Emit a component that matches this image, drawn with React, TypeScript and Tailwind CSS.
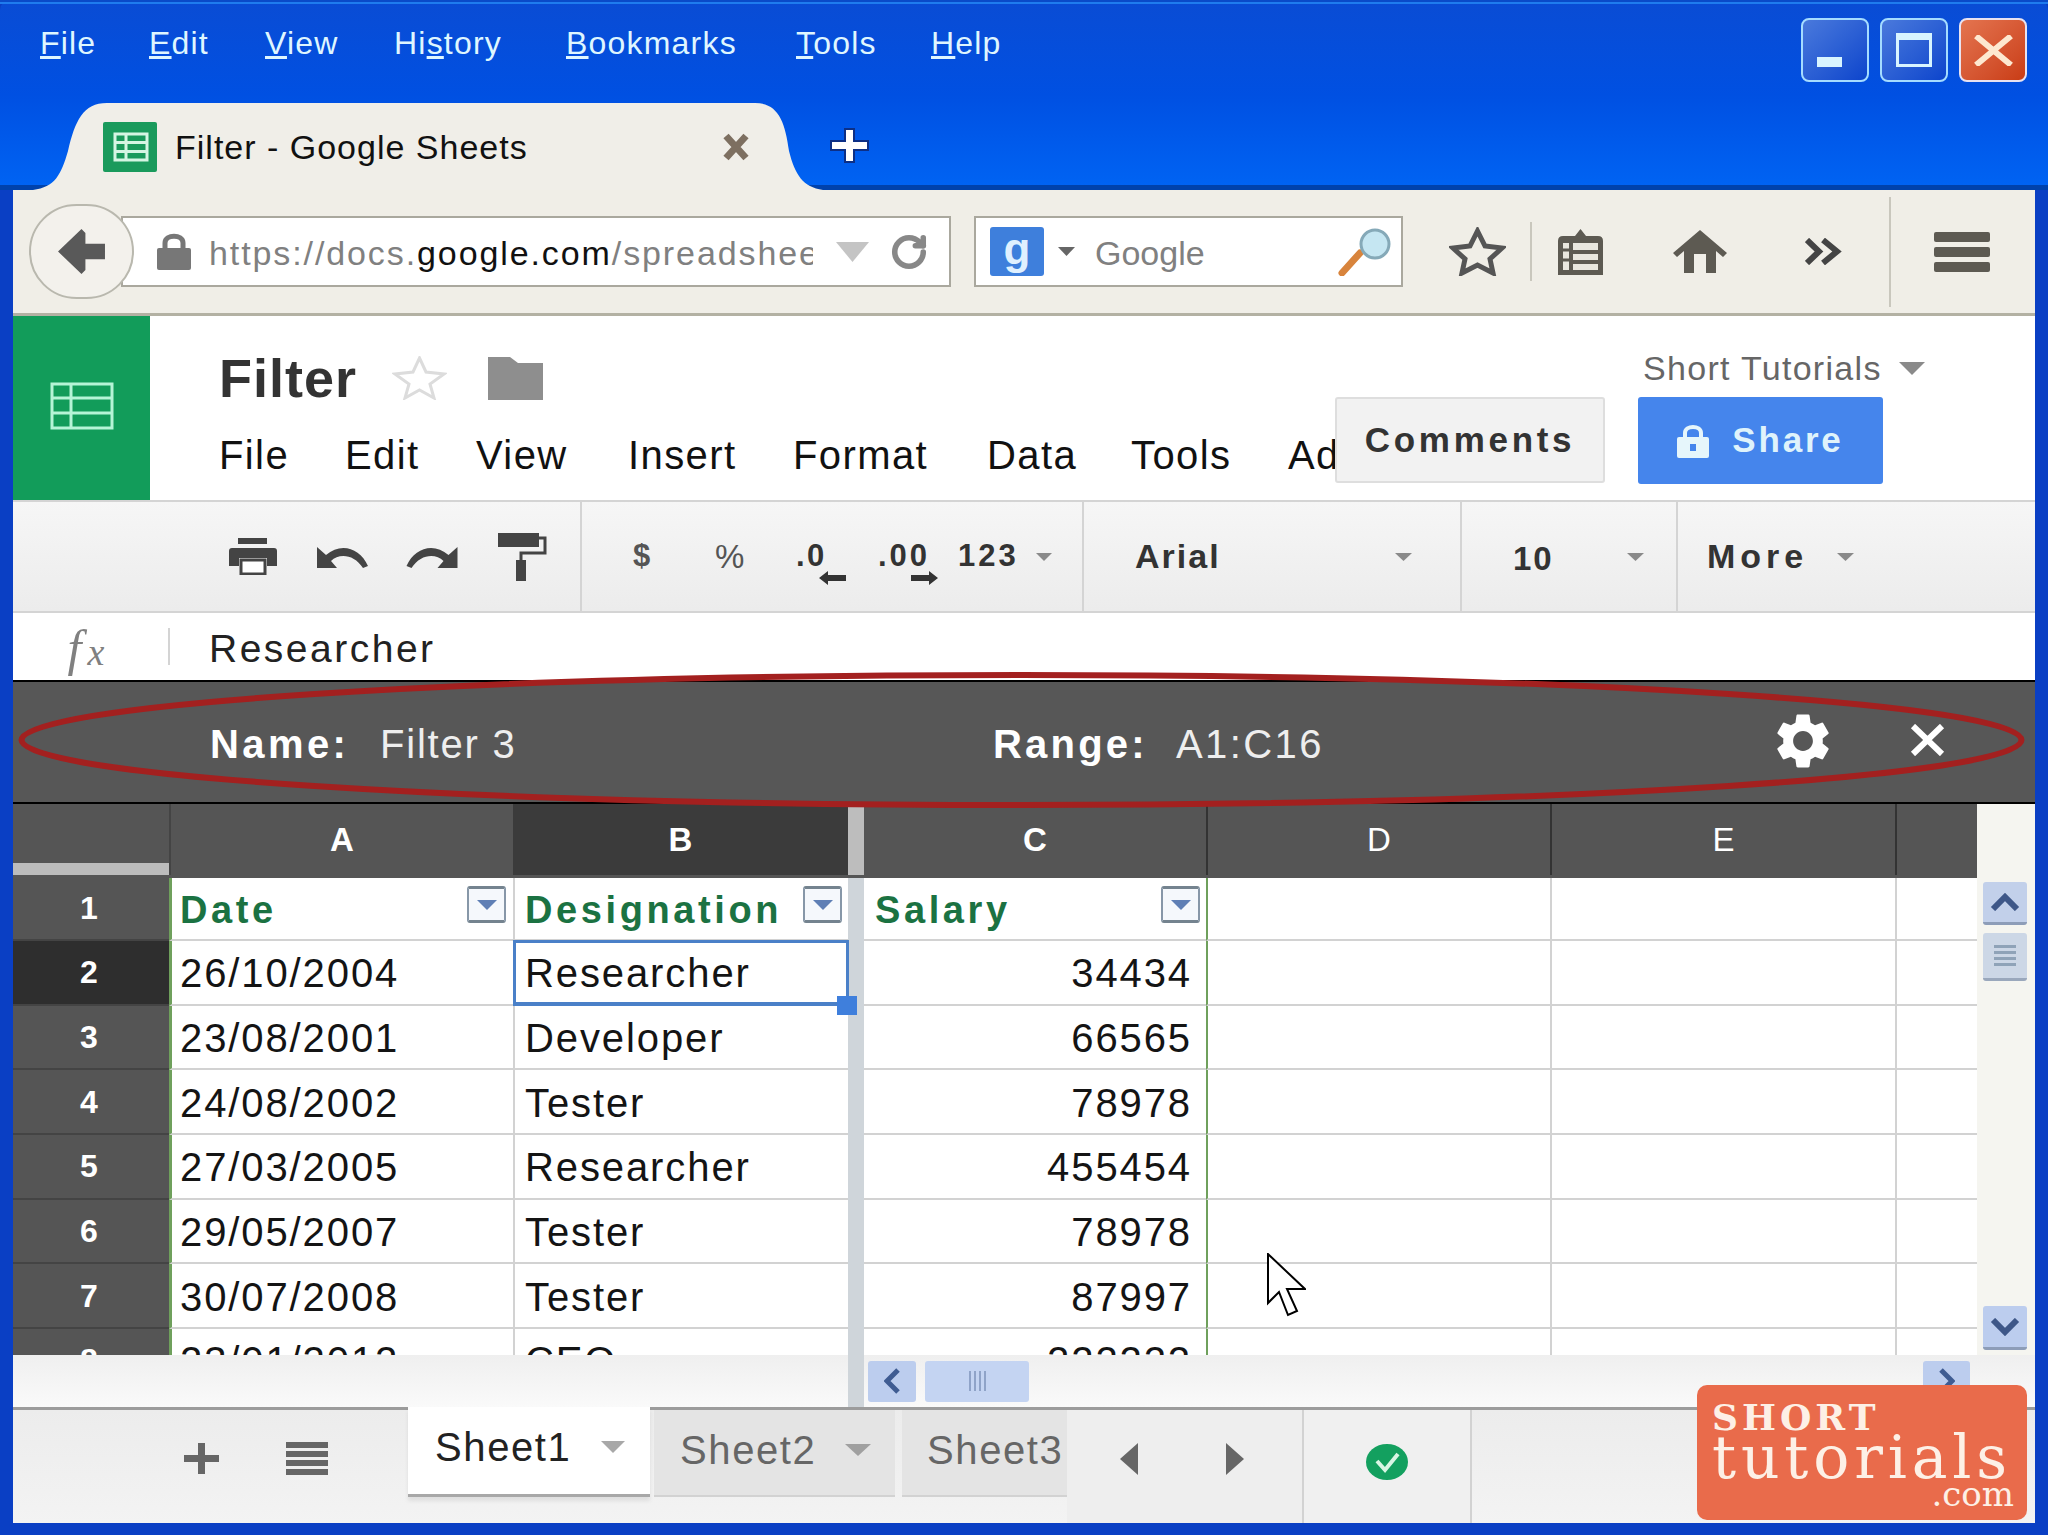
import { RotateCw } from "lucide-react";
import { MdSettings } from "react-icons/md";

const browserMenu = [
  { pre: "", u: "F", post: "ile", w: "w-[109px]" },
  { pre: "", u: "E", post: "dit", w: "w-[116px]" },
  { pre: "", u: "V", post: "iew", w: "w-[129px]" },
  { pre: "Hi", u: "s", post: "tory", w: "w-[172px]" },
  { pre: "", u: "B", post: "ookmarks", w: "w-[230px]" },
  { pre: "", u: "T", post: "ools", w: "w-[135px]" },
  { pre: "", u: "H", post: "elp", w: "w-[80px]" },
];

const sheetMenu = [
  { label: "File", w: "w-[126px]" },
  { label: "Edit", w: "w-[131px]" },
  { label: "View", w: "w-[152px]" },
  { label: "Insert", w: "w-[165px]" },
  { label: "Format", w: "w-[194px]" },
  { label: "Data", w: "w-[144px]" },
  { label: "Tools", w: "w-[157px]" },
  { label: "Add-ons", w: "w-[100px]" },
];

const rows = [
  { n: "2", date: "26/10/2004", job: "Researcher", pay: "34434" },
  { n: "3", date: "23/08/2001", job: "Developer", pay: "66565" },
  { n: "4", date: "24/08/2002", job: "Tester", pay: "78978" },
  { n: "5", date: "27/03/2005", job: "Researcher", pay: "455454" },
  { n: "6", date: "29/05/2007", job: "Tester", pay: "78978" },
  { n: "7", date: "30/07/2008", job: "Tester", pay: "87997" },
  { n: "8", date: "23/01/2012", job: "CEO", pay: "222222" },
];

const colTemplate = "grid grid-cols-[156px_344px_335px_16px_342px_344px_345px_82px]";

const Tri = ({ className = "", color = "#8a8a8a" }: { className?: string; color?: string }) => (
  <svg viewBox="0 0 10 8" preserveAspectRatio="none" className={className}>
    <path d="M0 0H10L5 8Z" fill={color} />
  </svg>
);

const FilterBtn = () => (
  <div className="flex h-[37px] w-[39px] -translate-y-[4px] items-center justify-center rounded-[3px] border-x-2 border-y-[3px] border-x-[#8797a8] border-y-[#74838f] bg-[#f5f8fc]">
    <Tri className="h-[10px] w-[20px]" color="#5f7fb5" />
  </div>
);

const HeadLabel = ({ children }: { children: React.ReactNode }) => (
  <span className="translate-y-[2px] text-[38px] font-bold tracking-[3.6px] text-[#1b7242]">{children}</span>
);

const Printer = () => (
  <svg viewBox="0 0 48 37" className="h-[37px] w-[48px]">
    <rect x="9" y="0" width="29" height="6" fill="#444" />
    <path d="M3 10H45Q48 10 48 13V28H38V20H10V28H0V13Q0 10 3 10Z" fill="#444" />
    <rect x="12" y="22" width="24" height="14" fill="#fff" stroke="#444" strokeWidth="3" />
  </svg>
);

const Undo = ({ flip = false }: { flip?: boolean }) => (
  <svg viewBox="0 0 51 22" className={flip ? "h-[22px] w-[52px] -scale-x-100" : "h-[22px] w-[51px]"}>
    <path d="M0 1V22H20L14 15C22 7 37 8 46 22L51 20C43 2 24-4 9 9Z" fill="#444" />
  </svg>
);

const Roller = () => (
  <svg viewBox="0 0 49 48" className="h-[48px] w-[49px]">
    <rect x="0" y="0" width="41" height="14" fill="#444" />
    <path d="M41 5H47V20H23V28" fill="none" stroke="#444" strokeWidth="3" />
    <rect x="18" y="27" width="10" height="21" fill="#444" />
  </svg>
);

const Cell = ({ children, className = "" }: { children?: React.ReactNode; className?: string }) => (
  <div className={`flex items-center whitespace-nowrap border-b-2 border-b-[#d2d2d2] text-[40px] tracking-[1.9px] text-[#141414] ${className}`}>
    {children}
  </div>
);

export default function App() {
  return (
    <div className="relative flex h-[1535px] w-[2048px] flex-col overflow-hidden bg-[#0a3fc4] font-['Liberation_Sans',Arial,sans-serif]">
      {/* title bar */}
      <div className="h-[190px] shrink-0 rounded-t-[10px] bg-gradient-to-b from-[#0a4cd4] via-[#0050e2] to-[#0064f4] shadow-[inset_0_-5px_0_#0042ac]">
        <div className="h-[4px] border-t-2 border-t-[#0a4ac8] bg-[#1f7cee]" />
        <div className="flex h-[99px] justify-between pl-[40px] pr-[21px] pt-[14px]">
          <div className="flex h-[50px] items-center text-[32px] text-[#dff6ff]">
            {browserMenu.map((m) => (
              <span key={m.u + m.post} className={`${m.w} shrink-0 tracking-[1.2px]`}>
                {m.pre}
                <u>{m.u}</u>
                {m.post}
              </span>
            ))}
          </div>
          <div className="flex gap-[11px]">
            <div className="flex h-[64px] w-[68px] items-end rounded-[8px] border-2 border-[#a5dcff] bg-gradient-to-br from-[#4a79dc] to-[#0c44cc] pb-[13px] pl-[14px]">
              <div className="h-[10px] w-[25px] bg-[#d8f4ff]" />
            </div>
            <div className="flex h-[64px] w-[68px] items-center justify-center rounded-[8px] border-2 border-[#a5dcff] bg-gradient-to-br from-[#4a79dc] to-[#0c44cc]">
              <div className="h-[34px] w-[36px] border-[3px] border-t-[7px] border-[#d8f4ff]" />
            </div>
            <div className="flex h-[64px] w-[68px] items-center justify-center rounded-[8px] border-2 border-[#e8e2f0] bg-gradient-to-br from-[#e4744f] to-[#c93c14]">
              <svg viewBox="0 0 43 31" className="h-[31px] w-[43px]">
                <path d="M4 1L39 30M39 1L4 30" stroke="#fde8d0" strokeWidth="6" />
              </svg>
            </div>
          </div>
        </div>
        <div className="flex h-[87px] items-start pl-[33px]">
          <div className="relative h-[87px] w-[790px] shrink-0">
            <svg viewBox="0 0 790 87" preserveAspectRatio="none" className="absolute inset-0 h-full w-full">
              <path d="M0 87C22 84 28 72 35 48C42 18 50 0 74 0H722C745 0 752 18 756 48C762 72 770 84 790 87Z" fill="#f0eee8" />
            </svg>
            <div className="relative flex h-[87px] items-start pl-[70px] pt-[19px]">
              <svg viewBox="0 0 54 50" className="h-[50px] w-[54px] shrink-0">
                <rect width="54" height="50" rx="2" fill="#1a9a5c" />
                <path d="M12 12H44V38H12ZM12 20.5H44M12 29.5H44M23 12V38" fill="#1a9a5c" stroke="#d5f5e3" strokeWidth="3" />
              </svg>
              <span className="ml-[18px] w-[547px] shrink-0 text-[34px] tracking-[1px] text-[#111]">Filter - Google Sheets</span>
              <svg viewBox="0 0 28 28" className="mt-[11px] h-[28px] w-[28px] shrink-0">
                <path d="M4 3L24 25M24 3L4 25" stroke="#7d6f60" strokeWidth="7" />
              </svg>
            </div>
          </div>
          <svg viewBox="0 0 39 35" className="ml-[7px] mt-[25px] h-[35px] w-[39px]">
            <path d="M15 1H24V13H38V22H24V34H15V22H1V13H15Z" fill="#fff" stroke="#0c2f86" strokeWidth="2" />
          </svg>
        </div>
      </div>

      {/* navigation toolbar */}
      <div className="relative mx-[13px] flex h-[126px] shrink-0 items-center border-b-[3px] border-b-[#b3b1a3] bg-[#f0eee7]">
        <div className="z-10 ml-[16px] flex h-[95px] w-[105px] shrink-0 items-center justify-center rounded-full border-2 border-[#b9b8ae] bg-[#f3f1ec]">
          <svg viewBox="0 0 48 46" className="h-[45px] w-[49px]">
            <path d="M24 0L0 23L24 46L28 42V31H48V15H28V4Z" fill="#595959" />
          </svg>
        </div>
        <div className="-ml-[13px] flex h-[71px] w-[830px] shrink-0 items-center border-2 border-[#aaa89e] bg-white pl-[34px]">
          <svg viewBox="0 0 34 37" className="h-[37px] w-[34px] shrink-0">
            <path d="M8 17V10C8 1 26 1 26 10V17" fill="none" stroke="#777" strokeWidth="5" />
            <rect x="0" y="15" width="34" height="22" rx="2" fill="#777" />
          </svg>
          <div className="ml-[18px] w-[604px] shrink-0 overflow-hidden whitespace-nowrap pt-[4px] text-[34px] tracking-[1.9px] text-[#808080]">
            https://docs.<span className="text-[#111]">google.com</span>/spreadsheets/d/1
          </div>
          <Tri className="ml-[23px] h-[20px] w-[33px] shrink-0" color="#c4c4c4" />
          <RotateCw className="ml-[21px] h-[38px] w-[38px] shrink-0 text-[#888]" strokeWidth={3.5} />
        </div>
        <div className="ml-[23px] flex h-[71px] w-[429px] shrink-0 items-center border-2 border-[#aaa89e] bg-white pl-[14px]">
          <div className="flex h-[49px] w-[54px] shrink-0 items-center justify-center rounded-[3px] bg-[#3e7fdc] pb-[6px] text-[44px] font-bold leading-none text-[#dff0ff]">g</div>
          <Tri className="ml-[14px] h-[9px] w-[17px] shrink-0" color="#666" />
          <span className="ml-[20px] w-[243px] shrink-0 pt-[4px] text-[34px] text-[#808080]">Google</span>
          <svg viewBox="0 0 55 49" className="h-[49px] w-[55px] shrink-0">
            <path d="M4 46L22 26" stroke="#d8843c" strokeWidth="7" strokeLinecap="round" />
            <ellipse cx="37" cy="17" rx="14" ry="14" fill="#c5e6f2" stroke="#85a9b8" strokeWidth="3" />
          </svg>
        </div>
        <svg viewBox="0 0 57 49" className="ml-[46px] h-[49px] w-[57px] shrink-0">
          <path d="M28.5 4L36 19L53 21L41 32L44 46L28.5 38L13 46L16 32L4 21L21 19Z" fill="none" stroke="#555" strokeWidth="5" />
        </svg>
        <div className="ml-[24px] h-[59px] w-[2px] shrink-0 bg-[#c9c7bd]" />
        <svg viewBox="0 0 47 46" className="ml-[25px] h-[46px] w-[47px] shrink-0">
          <path d="M23.5 0L29 7H41Q46 7 46 12V46H1V12Q1 7 6 7H18Z" fill="#5d5a52" />
          <path d="M16 14H41V21H16ZM16 25H41V31H16ZM16 35H41V41H16ZM6 14H12V41H6Z" fill="#e9e7df" />
          <path d="M6 21H12M6 31H12" stroke="#5d5a52" strokeWidth="3" />
        </svg>
        <svg viewBox="0 0 54 43" className="ml-[69px] h-[43px] w-[54px] shrink-0">
          <path d="M27 0L54 23L50 27L43 21V43H33V24H21V43H11V21L4 27L0 23Z" fill="#5d5a52" />
        </svg>
        <svg viewBox="0 0 40 27" className="ml-[78px] h-[27px] w-[40px] shrink-0">
          <path d="M2 2L14 13.5L2 25M18 2L32 13.5L18 25" fill="none" stroke="#444" strokeWidth="6" />
        </svg>
        <div className="ml-[44px] h-[110px] w-[2px] shrink-0 bg-[#c9c7bd]" />
        <div className="ml-[43px] flex w-[56px] shrink-0 flex-col gap-[5px]">
          <div className="h-[10px] rounded-[2px] bg-[#5d5a52]" />
          <div className="h-[10px] rounded-[2px] bg-[#5d5a52]" />
          <div className="h-[10px] rounded-[2px] bg-[#5d5a52]" />
        </div>
      </div>

      {/* page */}
      <div className="mx-[13px] flex h-[1207px] flex-col bg-white">
        {/* sheets header */}
        <div className="flex h-[184px] shrink-0">
          <div className="flex w-[137px] shrink-0 items-center justify-center bg-[#129c5a] pb-[5px]">
            <svg viewBox="0 0 64 48" className="h-[48px] w-[64px]">
              <path d="M2 2H62V46H2ZM2 16H62M2 31H62M21 2V46" fill="none" stroke="#b5f4d6" strokeWidth="3" />
            </svg>
          </div>
          <div className="w-[1185px] shrink-0 pl-[69px] pt-[36px]">
            <div className="flex h-[52px] items-center">
              <span className="w-[173px] shrink-0 text-[54px] font-bold tracking-[1px] text-[#333]">Filter</span>
              <svg viewBox="0 0 55 44" className="h-[44px] w-[55px] shrink-0">
                <path d="M27.5 2L34 16L52 18L38 28L42 42L27.5 34L13 42L17 28L3 18L21 16Z" fill="none" stroke="#dcdcdc" strokeWidth="3" />
              </svg>
              <svg viewBox="0 0 55 43" className="ml-[41px] h-[43px] w-[55px] shrink-0">
                <path d="M0 0H22L30 6H55V43H0Z" fill="#8e8e8e" />
              </svg>
            </div>
            <div className="mt-[26px] flex h-[50px] w-[1116px] items-center overflow-hidden text-[40px] tracking-[1.4px] text-[#111]">
              {sheetMenu.map((m) => (
                <span key={m.label} className={`${m.w} shrink-0 whitespace-nowrap`}>
                  {m.label}
                </span>
              ))}
            </div>
          </div>
          <div className="flex-1 pt-[32px]">
            <div className="flex h-[40px] items-center pl-[308px]">
              <span className="w-[256px] shrink-0 whitespace-nowrap text-[34px] tracking-[1.3px] text-[#666]">Short Tutorials</span>
              <Tri className="h-[13px] w-[26px]" />
            </div>
            <div className="mt-[9px] flex">
              <div className="flex h-[86px] w-[270px] shrink-0 items-center justify-center rounded-[3px] border-2 border-[#dedede] bg-[#f2f2f2] text-[35px] font-bold tracking-[3.7px] text-[#333]">
                Comments
              </div>
              <div className="ml-[33px] flex h-[87px] w-[245px] shrink-0 items-center justify-center gap-[23px] rounded-[3px] bg-[#4585ec] text-[35px] font-bold tracking-[2.8px] text-[#dff3fb]">
                <svg viewBox="0 0 32 34" className="h-[34px] w-[32px]">
                  <path d="M8 15V9C8 1 24 1 24 9V15" fill="none" stroke="#e6f6fb" strokeWidth="4" />
                  <rect y="13" width="32" height="21" rx="2" fill="#e6f6fb" />
                  <rect x="13" y="20" width="6" height="7" fill="#4585ec" />
                </svg>
                Share
              </div>
            </div>
          </div>
        </div>

        {/* format toolbar */}
        <div className="flex h-[113px] shrink-0 border-y-[2px] border-y-[#d4d4d4] bg-gradient-to-b from-[#f6f6f6] to-[#ececec] text-[#333]">
          <div className="flex w-[569px] shrink-0 items-center border-r-2 border-r-[#d4d4d4] pl-[216px]">
            <Printer />
            <div className="ml-[40px]"><Undo /></div>
            <div className="ml-[38px]"><Undo flip /></div>
            <div className="ml-[40px]"><Roller /></div>
          </div>
          <div className="flex w-[502px] shrink-0 items-center border-r-2 border-r-[#d4d4d4] text-[31px] font-bold">
            <span className="ml-[51px] w-[19px] shrink-0 text-[#555]">$</span>
            <span className="ml-[63px] w-[30px] shrink-0 text-[33px] font-normal text-[#555]">%</span>
            <div className="relative ml-[51px] w-[50px] shrink-0">
              <span className="whitespace-nowrap tracking-[2.5px]">.0</span>
              <svg viewBox="0 0 27 14" className="absolute -bottom-[5px] left-[23px] h-[14px] w-[27px]">
                <path d="M0 7L9 0V4H27V10H9V14Z" fill="#333" />
              </svg>
            </div>
            <div className="relative ml-[32px] w-[60px] shrink-0">
              <span className="whitespace-nowrap tracking-[3px]">.00</span>
              <svg viewBox="0 0 27 14" className="absolute -bottom-[5px] left-[33px] h-[14px] w-[27px]">
                <path d="M27 7L18 0V4H0V10H18V14Z" fill="#333" />
              </svg>
            </div>
            <span className="ml-[20px] w-[68px] shrink-0 tracking-[3px]">123</span>
            <Tri className="ml-[10px] h-[8px] w-[16px] shrink-0" />
          </div>
          <div className="flex w-[378px] shrink-0 items-center border-r-2 border-r-[#d4d4d4] pl-[51px] text-[34px] font-bold">
            <span className="w-[260px] shrink-0 tracking-[2px]">Arial</span>
            <Tri className="h-[8px] w-[17px] shrink-0" />
          </div>
          <div className="flex w-[216px] shrink-0 items-center border-r-2 border-r-[#d4d4d4] pl-[51px] pt-[4px] text-[33px] font-bold">
            <span className="w-[114px] shrink-0 tracking-[2px]">10</span>
            <Tri className="-mt-[4px] h-[8px] w-[17px] shrink-0" />
          </div>
          <div className="flex flex-1 items-center pl-[29px] text-[34px] font-bold">
            <span className="w-[130px] shrink-0 tracking-[5px]">More</span>
            <Tri className="h-[8px] w-[17px] shrink-0" />
          </div>
        </div>

        {/* formula bar */}
        <div className="flex h-[67px] shrink-0 items-center bg-white">
          <div className="flex w-[155px] shrink-0 items-baseline justify-center pr-[9px] pt-[2px] font-['Liberation_Serif',serif] italic text-[#808080]">
            <span className="text-[50px] leading-none">f</span>
            <span className="ml-[6px] text-[38px] leading-none">x</span>
          </div>
          <div className="h-[37px] w-[2px] shrink-0 bg-[#d4d4d4]" />
          <span className="ml-[39px] pt-[6px] text-[39px] tracking-[2.5px] text-[#222]">Researcher</span>
        </div>

        {/* filter bar */}
        <div className="flex h-[124px] shrink-0 items-center border-y-2 border-y-black bg-[#575757] pl-[197px] pt-[4px] text-[40px] tracking-[1.8px] text-white">
          <span className="w-[170px] shrink-0 font-bold tracking-[3.4px]">Name:</span>
          <span className="w-[613px] shrink-0 font-normal text-[#eee]">Filter 3</span>
          <span className="w-[183px] shrink-0 font-bold tracking-[3.2px]">Range:</span>
          <span className="w-[594px] shrink-0 tracking-[2.4px] text-[#eee]">A1:C16</span>
          <MdSettings className="-mt-[6px] h-[66px] w-[66px] shrink-0" />
          <svg viewBox="0 0 35 32" className="-mt-[8px] ml-[74px] h-[32px] w-[35px] shrink-0">
            <path d="M3 2L32 30M32 2L3 30" stroke="#fff" strokeWidth="6" />
          </svg>
        </div>

        {/* grid + scrollbars */}
        <div className="flex h-[551px] shrink-0">
          <div className="w-[1964px] shrink-0 overflow-hidden">
            <div className={`${colTemplate} h-[74px] bg-[#555555] pb-[3px] text-[33px] text-white`}>
              <div className="flex items-end">
                <div className="h-[12px] w-full bg-[#bcbcbc]" />
              </div>
              <div className="flex items-center justify-center border-l-2 border-l-[#444] font-bold">A</div>
              <div className="flex items-center justify-center bg-[#3b3b3b] font-bold">B</div>
              <div className="bg-[#bdbdbd]" />
              <div className="flex items-center justify-center font-bold">C</div>
              <div className="flex items-center justify-center border-l-2 border-l-[#333]">D</div>
              <div className="flex items-center justify-center border-l-2 border-l-[#333]">E</div>
              <div className="border-l-2 border-l-[#333]" />
            </div>

            <div className={`${colTemplate} h-[63px]`}>
              <div className="flex items-center justify-center border-b-2 border-b-[#444] bg-[#555555] pb-[2px] pr-[4px] text-[32px] font-bold text-white">1</div>
              <Cell className="justify-between border-l-[3px] border-l-[#6fa05c] pl-[8px] pr-[7px]">
                <HeadLabel>Date</HeadLabel>
                <FilterBtn />
              </Cell>
              <Cell className="justify-between border-l-2 border-l-[#d2d2d2] pl-[10px] pr-[6px]">
                <HeadLabel>Designation</HeadLabel>
                <FilterBtn />
              </Cell>
              <div className="bg-[#cfd5da]" />
              <Cell className="justify-between pl-[11px] pr-[6px]">
                <HeadLabel>Salary</HeadLabel>
                <FilterBtn />
              </Cell>
              <Cell className="border-l-2 border-l-[#6fa05c]" />
              <Cell className="border-l-2 border-l-[#d2d2d2]" />
              <Cell className="border-l-2 border-l-[#d2d2d2]" />
            </div>

            {rows.map((r) => (
              <div key={r.n} className={`${colTemplate} h-[64.7px]`}>
                <div
                  className={
                    r.n === "2"
                      ? "flex items-center justify-center border-b-2 border-b-[#444] bg-[#2e2e2e] pr-[4px] text-[32px] font-bold text-white"
                      : "flex items-center justify-center border-b-2 border-b-[#444] bg-[#555555] pr-[4px] text-[32px] font-bold text-white"
                  }
                >
                  {r.n}
                </div>
                <Cell className="border-l-[3px] border-l-[#6fa05c] pl-[8px] pt-[2px]">{r.date}</Cell>
                <Cell className="relative border-l-2 border-l-[#d2d2d2] pl-[10px] pt-[2px]">
                  {r.job}
                  {r.n === "2" && (
                    <>
                      <div className="absolute -bottom-[2px] -left-[2px] -right-[1px] -top-[1px] z-10 border-[3px] border-b-[4px] border-[#4a80c8]" />
                      <div className="absolute -bottom-[11px] -right-[9px] z-20 h-[19px] w-[20px] bg-[#3f7fdc]" />
                    </>
                  )}
                </Cell>
                <div className="bg-[#cfd5da]" />
                <Cell className="justify-end pr-[14px] pt-[2px]">{r.pay}</Cell>
                <Cell className="border-l-2 border-l-[#6fa05c]" />
                <Cell className="border-l-2 border-l-[#d2d2d2]" />
                <Cell className="border-l-2 border-l-[#d2d2d2]" />
              </div>
            ))}
          </div>

          <div className="flex w-[58px] shrink-0 flex-col bg-[#f5f5f0] pl-[6px] pt-[78px]">
            <div className="flex h-[43px] w-[44px] items-center justify-center rounded-[3px] border-b-[3px] border-b-[#8d9db8] bg-[#c2d0ea]">
              <svg viewBox="0 0 30 18" className="h-[18px] w-[30px]">
                <path d="M3 16L15 4L27 16" fill="none" stroke="#3e5788" strokeWidth="6" />
              </svg>
            </div>
            <div className="mt-[8px] flex h-[48px] w-[44px] flex-col items-center justify-center gap-[3px] rounded-[3px] border-b-[3px] border-b-[#9aa8bc] bg-[#ccd7e6]">
              <div className="h-[3px] w-[22px] bg-[#8fa3b8]" />
              <div className="h-[3px] w-[22px] bg-[#8fa3b8]" />
              <div className="h-[3px] w-[22px] bg-[#8fa3b8]" />
              <div className="h-[3px] w-[22px] bg-[#8fa3b8]" />
            </div>
            <div className="mt-[325px] flex h-[44px] w-[44px] items-center justify-center rounded-[3px] border-b-[3px] border-b-[#8d9db8] bg-[#bccdee]">
              <svg viewBox="0 0 30 18" className="h-[18px] w-[30px]">
                <path d="M3 2L15 14L27 2" fill="none" stroke="#3e5788" strokeWidth="6" />
              </svg>
            </div>
          </div>
        </div>

        {/* horizontal scrollbar */}
        <div className="flex h-[52px] shrink-0 items-center bg-gradient-to-b from-[#efefef] to-[#fafafa]">
          <div className="h-full w-[835px] shrink-0" />
          <div className="h-full w-[16px] shrink-0 bg-[#cfd5da]" />
          <div className="ml-[4px] flex h-[41px] w-[48px] shrink-0 items-center justify-center rounded-[3px] bg-[#bccdee]">
            <svg viewBox="0 0 16 26" className="h-[26px] w-[16px]">
              <path d="M14 2L3 13L14 24" fill="none" stroke="#3f5c92" strokeWidth="5" />
            </svg>
          </div>
          <div className="ml-[9px] flex h-[41px] w-[104px] shrink-0 items-center justify-center gap-[3px] rounded-[3px] bg-[#c4d4f2]">
            <div className="h-[20px] w-[2px] bg-[#8fa3c8]" />
            <div className="h-[20px] w-[2px] bg-[#8fa3c8]" />
            <div className="h-[20px] w-[2px] bg-[#8fa3c8]" />
            <div className="h-[20px] w-[2px] bg-[#8fa3c8]" />
          </div>
          <div className="ml-[894px] flex h-[41px] w-[47px] shrink-0 items-center justify-center rounded-[3px] bg-[#bccdee]">
            <svg viewBox="0 0 16 26" className="h-[26px] w-[16px]">
              <path d="M2 2L13 13L2 24" fill="none" stroke="#3f5c92" strokeWidth="5" />
            </svg>
          </div>
        </div>

        {/* sheet tabs */}
        <div className="flex h-[116px] shrink-0 items-start border-t-[3px] border-t-[#9c9c9c] bg-gradient-to-b from-[#ececec] to-[#f3f3f3]">
          <div className="flex h-[97px] w-[395px] shrink-0 items-center pl-[171px]">
            <svg viewBox="0 0 35 31" className="h-[31px] w-[35px] shrink-0">
              <path d="M14 0H21V12H35V19H21V31H14V19H0V12H14Z" fill="#666" />
            </svg>
            <div className="ml-[67px] flex w-[42px] shrink-0 flex-col gap-[3px]">
              <div className="h-[6px] bg-[#666]" />
              <div className="h-[6px] bg-[#666]" />
              <div className="h-[6px] bg-[#666]" />
              <div className="h-[6px] bg-[#666]" />
            </div>
          </div>
          <div className="-mt-[3px] flex h-[90px] w-[242px] shrink-0 items-center border-b-[3px] border-b-[#a8a8a8] bg-white pb-[8px] pl-[27px] text-[40px] tracking-[1.6px] text-[#222] shadow-[0_4px_4px_rgba(0,0,0,0.08)]">
            <span className="w-[166px] shrink-0">Sheet1</span>
            <Tri className="h-[12px] w-[24px] shrink-0" color="#a8a8a8" />
          </div>
          <div className="ml-[4px] flex h-[87px] w-[241px] shrink-0 items-center border-b-2 border-b-[#d2d2d2] bg-[#e4e4e4] pb-[6px] pl-[26px] text-[40px] tracking-[1.6px] text-[#666]">
            <span className="w-[165px] shrink-0">Sheet2</span>
            <Tri className="h-[12px] w-[26px] shrink-0" color="#a0a0a0" />
          </div>
          <div className="ml-[7px] flex h-[87px] w-[165px] shrink-0 items-center overflow-hidden border-b-2 border-b-[#d2d2d2] bg-[#e4e4e4] pb-[6px] pl-[25px] text-[40px] tracking-[1.6px] text-[#666]">
            <span className="whitespace-nowrap">Sheet3</span>
          </div>
          <div className="flex h-[113px] w-[235px] shrink-0 items-center bg-[#eeeeee] pb-[16px] pl-[53px]">
            <svg viewBox="0 0 18 32" className="h-[32px] w-[18px]">
              <path d="M18 0V32L0 16Z" fill="#666" />
            </svg>
            <svg viewBox="0 0 18 32" className="ml-[88px] h-[32px] w-[18px]">
              <path d="M0 0V32L18 16Z" fill="#666" />
            </svg>
          </div>
          <div className="flex h-[113px] w-[170px] shrink-0 items-center justify-center border-x-2 border-x-[#d2d2d2] bg-[#f0f0f0] pb-[9px]">
            <svg viewBox="0 0 42 36" className="h-[36px] w-[42px]">
              <ellipse cx="21" cy="18" rx="21" ry="18" fill="#13a05f" />
              <path d="M11 17L19 26L32 10" fill="none" stroke="#d8f5e4" strokeWidth="4" />
            </svg>
          </div>
        </div>
      </div>

      <div className="h-[12px] shrink-0 bg-[#0a3fc4]" />

      {/* red marker ring around the filter bar */}
      <svg viewBox="0 0 2048 160" className="pointer-events-none absolute left-0 top-[660px] h-[160px] w-[2048px]">
        <ellipse cx="1021.5" cy="80" rx="1000" ry="65" fill="none" stroke="#a3201f" strokeWidth="6" />
      </svg>

      {/* mouse pointer */}
      <svg viewBox="0 0 39 64" className="pointer-events-none absolute left-[1267px] top-[1253px] h-[64px] w-[39px]">
        <path d="M1 1V50L12 39L21 62L30 58L20 36L38 36Z" fill="#fff" stroke="#000" strokeWidth="2" />
      </svg>

      {/* watermark */}
      <div className="absolute left-[1697px] top-[1385px] h-[135px] w-[330px] rounded-[10px] bg-[#e96b4b] pl-[15px] pt-[15px] font-['DejaVu_Serif',serif] text-[#fdf0e6]">
        <div className="text-[36px] font-bold leading-[34px] tracking-[4px]">SHORT</div>
        <div className="-mt-[6px] text-[60px] leading-[58px] tracking-[4.8px]">tutorials</div>
        <div className="-mt-[8px] pr-[13px] text-right text-[34px] leading-[32px]">.com</div>
      </div>
    </div>
  );
}
